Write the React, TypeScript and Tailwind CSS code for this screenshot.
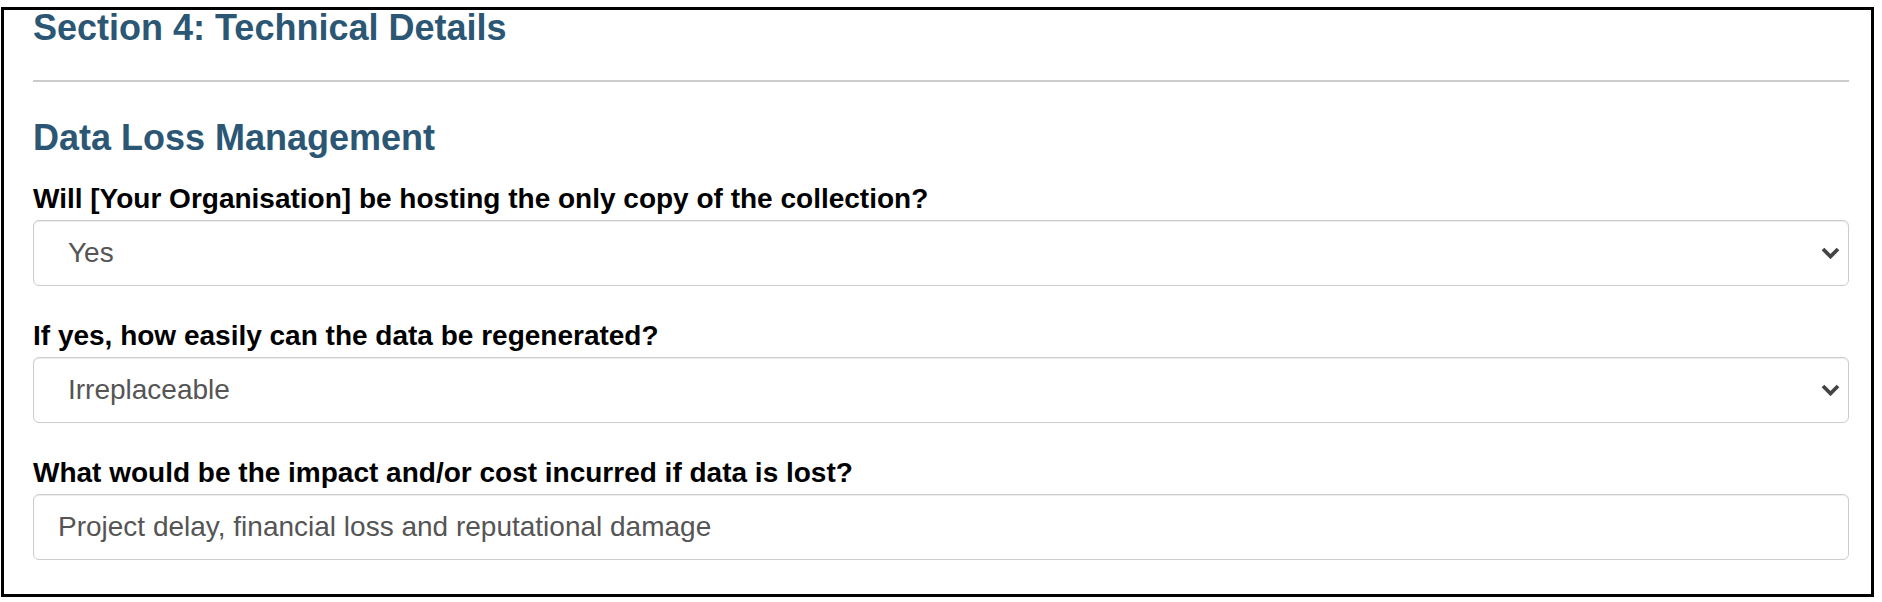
import React from 'react';

const fieldShell =
  'flex h-[66px] w-full items-center rounded-[6px] border border-[#cccccc] bg-white pr-[8px] text-[28px] text-[#555555] shadow-[inset_0_1px_1px_rgba(0,0,0,0.075)]';

const Chevron: React.FC = () => (
  <svg width="19" height="12" viewBox="0 0 19 12" className="shrink-0">
    <polyline
      points="2,2 9.5,9.5 17,2"
      fill="none"
      stroke="#444444"
      strokeWidth="3.8"
      strokeLinecap="butt"
      strokeLinejoin="miter"
    />
  </svg>
);

interface FieldProps {
  label: string;
  value: string;
  select?: boolean;
  first?: boolean;
}

const Field: React.FC<FieldProps> = ({ label, value, select, first }) => (
  <div className={first ? 'mt-[27px]' : 'mt-[34px]'}>
    <label className="block text-[28px] font-bold leading-[32px] text-black">
      {label}
    </label>
    <div
      className={`${fieldShell} mt-[5px] ${select ? 'pl-[34px]' : 'pl-[24px]'}`}
    >
      <span className="flex-1">{value}</span>
      {select && <Chevron />}
    </div>
  </div>
);

export default function App() {
  return (
    <div
      className="min-h-[602px] bg-white pt-[7px] pl-[1px]"
      style={{ fontFamily: '"Liberation Sans", Arial, sans-serif' }}
    >
      <div className="w-[1873px] border-[3px] border-black pb-[34px] pl-[29px] pr-[22px]">
        <h2 className="text-[36px] font-bold leading-[36px] text-[#2b5775]">
          Section 4: Technical Details
        </h2>
        <div className="mt-[34px] h-[2px] bg-[#cccccc]" />
        <h3 className="mt-[38px] text-[36px] font-bold leading-[36px] text-[#2b5775]">
          Data Loss Management
        </h3>

        <Field
          first
          select
          label="Will [Your Organisation] be hosting the only copy of the collection?"
          value="Yes"
        />
        <Field
          select
          label="If yes, how easily can the data be regenerated?"
          value="Irreplaceable"
        />
        <Field
          label="What would be the impact and/or cost incurred if data is lost?"
          value="Project delay, financial loss and reputational damage"
        />
      </div>
    </div>
  );
}
